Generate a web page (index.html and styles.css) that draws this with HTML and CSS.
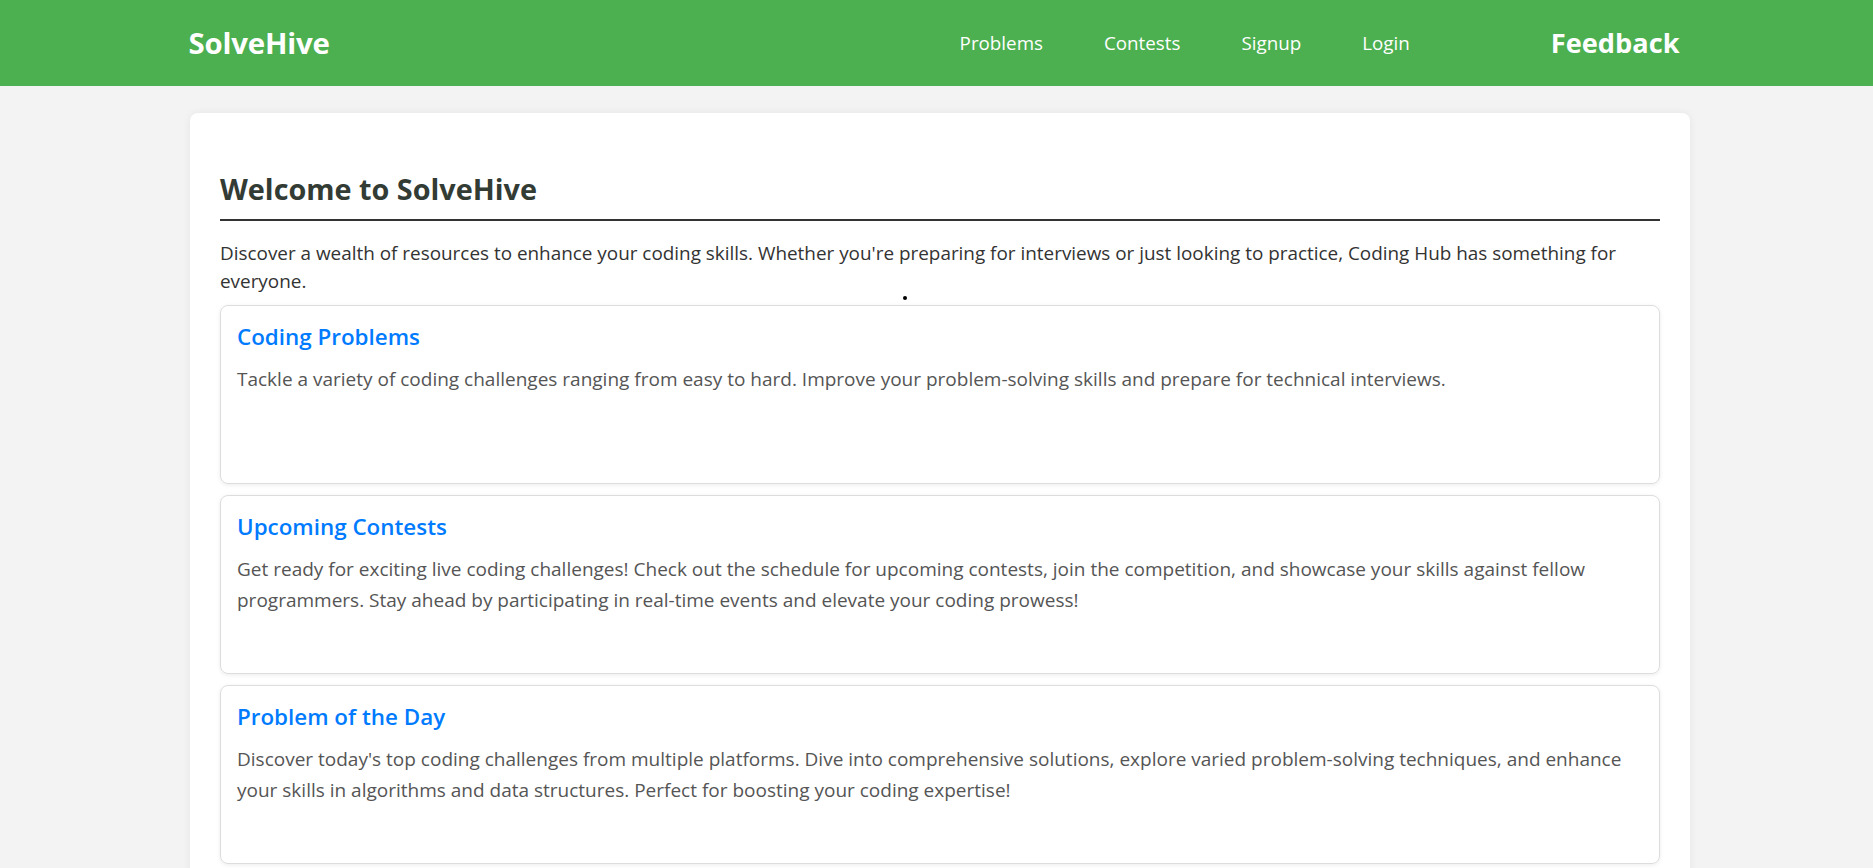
FILE: index.html
```html
<!DOCTYPE html>
<html lang="en">
<head>
<meta charset="utf-8">
<title>SolveHive</title>
<link rel="stylesheet" href="styles.css">
</head>
<body>
<header class="topbar">
  <div class="topbar-inner">
    <div class="logo">SolveHive</div>
    <nav class="nav">
      <a href="#">Problems</a>
      <a href="#">Contests</a>
      <a href="#">Signup</a>
      <a href="#">Login</a>
    </nav>
    <a class="feedback" href="#">Feedback</a>
  </div>
</header>
<main class="page">
  <section class="panel">
    <h2 class="panel-title">Welcome to SolveHive</h2>
    <p class="intro">Discover a wealth of resources to enhance your coding skills. Whether you're preparing for interviews or just looking to practice, Coding Hub has something for everyone.</p>
    <div class="stray"></div>
    <div class="cards">
      <article class="card">
        <h3 class="card-title">Coding Problems</h3>
        <p class="card-text">Tackle a variety of coding challenges ranging from easy to hard. Improve your problem-solving skills and prepare for technical interviews.</p>
      </article>
      <article class="card">
        <h3 class="card-title">Upcoming Contests</h3>
        <p class="card-text">Get ready for exciting live coding challenges! Check out the schedule for upcoming contests, join the competition, and showcase your skills against fellow programmers. Stay ahead by participating in real-time events and elevate your coding prowess!</p>
      </article>
      <article class="card">
        <h3 class="card-title">Problem of the Day</h3>
        <p class="card-text">Discover today's top coding challenges from multiple platforms. Dive into comprehensive solutions, explore varied problem-solving techniques, and enhance your skills in algorithms and data structures. Perfect for boosting your coding expertise!</p>
      </article>
    </div>
  </section>
</main>
</body>
</html>
```
FILE: styles.css
```css
* { box-sizing: border-box; }
html, body { margin: 0; padding: 0; }
body {
  font-family: "Open Sans", "Noto Sans", sans-serif;
  background: #f3f3f3;
  color: #333;
  overflow: hidden;
}
.topbar {
  background: #4caf50;
  height: 86px;
  color: #fff;
}
.topbar-inner {
  width: 1500px;
  margin: 0 auto;
  height: 100%;
  display: flex;
  align-items: center;
  padding: 0 7px 1px 2px;
}
.logo {
  font-size: 29.4px;
  font-weight: 700;
  letter-spacing: -0.2px;
}
.nav {
  margin-left: auto;
  display: flex;
  gap: 61px;
}
.nav a {
  color: #fff;
  text-decoration: none;
  font-size: 18.8px;
}
.feedback {
  margin-left: 141px;
  color: #fff;
  text-decoration: none;
  font-size: 27.2px;
  font-weight: 700;
}
.page {
  width: 1500px;
  margin: 27px 0 0 190px;
}
.panel {
  background: #fff;
  border-radius: 8px;
  box-shadow: 0 0 8px rgba(0,0,0,0.06);
  padding: 57px 30px 30px;
}
.panel-title {
  margin: 0;
  font-size: 28.8px;
  font-weight: 700;
  color: #333b35;
  padding-bottom: 11px;
  border-bottom: 2px solid #333;
  line-height: 38px;
}
.intro {
  margin: 18px 0 0;
  font-size: 18.9px;
  line-height: 28px;
  color: #333;
}
.stray {
  height: 10px;
  position: relative;
}
.stray::after {
  content: "";
  position: absolute;
  left: 683px;
  top: 1px;
  width: 4px;
  height: 4px;
  border-radius: 50%;
  background: #000;
}
.cards {
  display: flex;
  flex-direction: column;
  gap: 11px;
}
.card {
  height: 179px;
  border: 1px solid #ddd;
  border-radius: 8px;
  box-shadow: 0 1px 4px rgba(0,0,0,0.08);
  padding: 16px 16px;
}
.card-title {
  margin: 0;
  color: #007bff;
  font-size: 22.4px;
  font-weight: 600;
  line-height: 30px;
}
.card-text {
  margin: 12px 0 0;
  font-size: 19px;
  line-height: 31px;
  color: #555;
}
```
